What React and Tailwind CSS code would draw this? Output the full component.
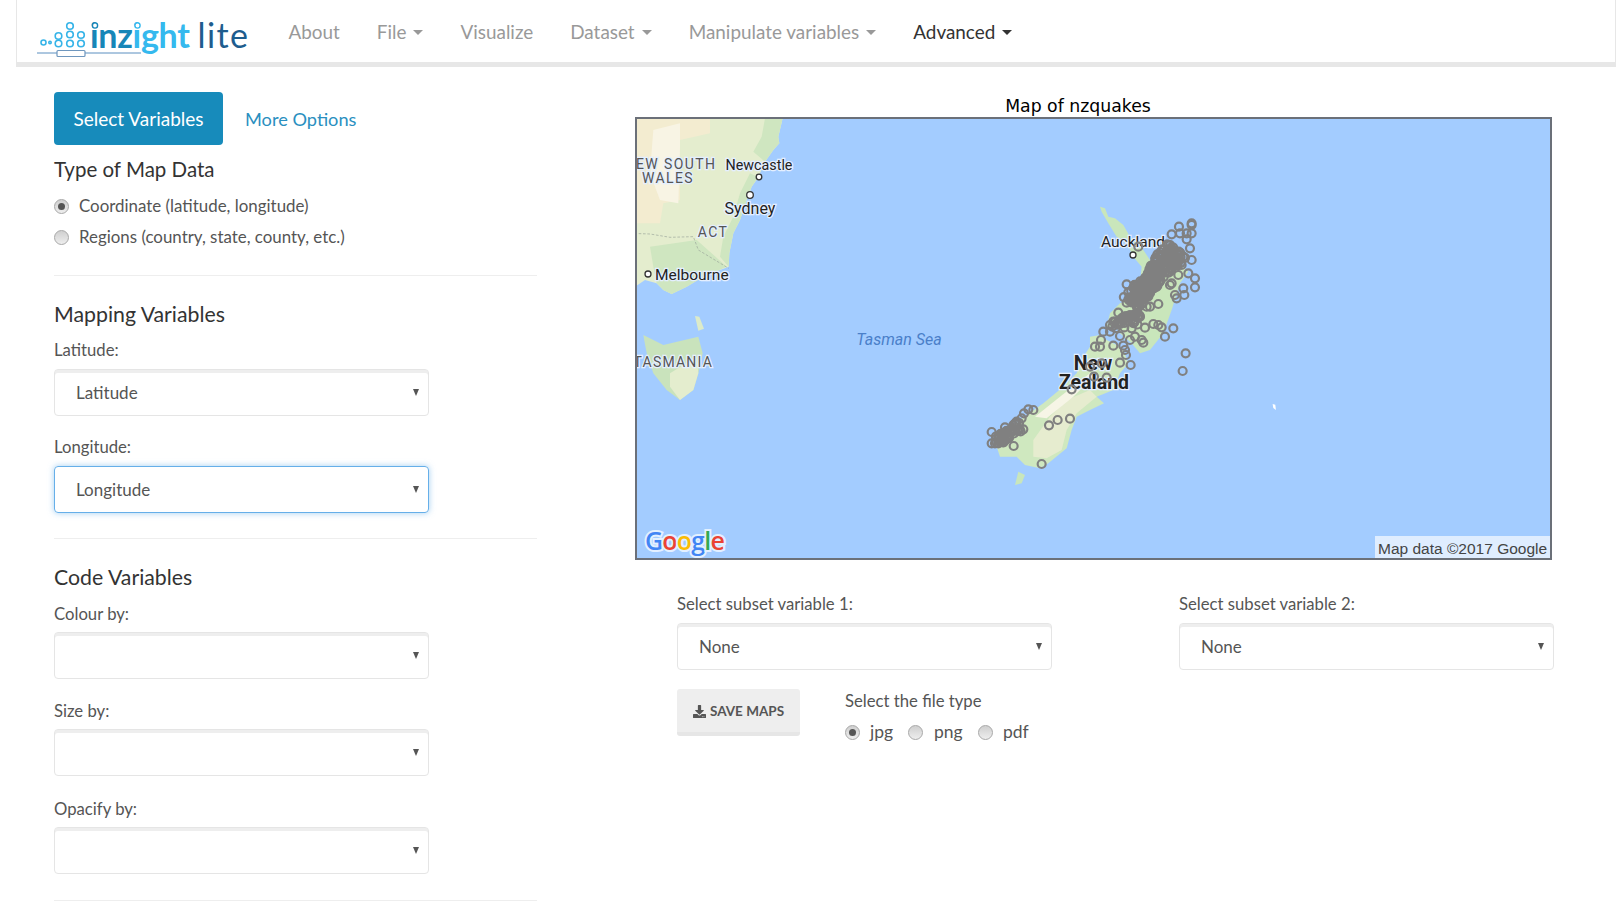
import React from "react";
import { FaDownload } from "react-icons/fa";

const navItems = [
  { label: "About" },
  { label: "File", caret: true },
  { label: "Visualize" },
  { label: "Dataset", caret: true },
  { label: "Manipulate variables", caret: true },
  { label: "Advanced", caret: true, active: true },
];

// scattered quakes, read off the map (in 3x crop coords, origin 950,200)
const outliers = [
  [725,70],[725,75],[687,80],[665,103],[690,100],[710,100],[725,100],[710,118],[720,145],[725,180],[700,170],[695,195],
  [715,220],[735,235],[735,262],[700,265],[703,285],[680,295],[675,285],[685,225],[665,250],[660,255],[530,253],[535,277],
  [600,210],[590,240],[565,140],[530,308],[570,350],[625,312],[590,320],[600,320],[505,338],[540,345],[515,355],[490,365],
  [480,375],[460,395],[480,395],[510,408],[545,385],[555,360],[585,383],[610,372],[625,375],[635,382],[670,385],[645,410],
  [555,410],[540,420],[575,420],[580,428],[453,420],[435,440],[450,440],[490,437],[520,437],[525,450],[528,465],[510,488],
  [542,495],[707,460],[698,513],[470,533],[432,530],[365,568],[420,500],[455,490],[250,630],[235,628],[222,640],[215,655],
  [200,665],[190,675],[165,682],[125,696],[220,688],[125,730],[135,730],[145,730],[191,738],[297,676],[323,660],[360,656],
  [275,792],[165,720],
];

function jitter(i) {
  const v = Math.sin(i * 12.9898) * 43758.5453;
  return v - Math.floor(v);
}

const quakes = [...outliers];
for (let i = 0; i < 220; i++) {
  const t = jitter(i);
  const off = (jitter(i + 500) - 0.5) * (t < 0.3 ? 70 : 56);
  quakes.push([680 - 138 * t + off * 0.8, 150 + 158 * t + off * 0.6]);
}
for (let i = 0; i < 30; i++) {
  quakes.push([485 + jitter(i + 900) * 85, 340 + jitter(i + 950) * 45]);
}
for (let i = 0; i < 40; i++) {
  const t = jitter(i + 1200);
  quakes.push([145 + 60 * t + (jitter(i + 1300) - 0.5) * 26, 722 - 42 * t + (jitter(i + 1400) - 0.5) * 26]);
}

function Radio({ checked }) {
  return (
    <span className="flex h-[15px] w-[15px] shrink-0 items-center justify-center rounded-full border border-[#a8a8a8] bg-gradient-to-b from-[#cfcfcf] to-[#eeeeee]">
      {checked && <span className="h-[7px] w-[7px] rounded-full bg-[#555]" />}
    </span>
  );
}

function SelectBox({ value, focus, className }) {
  return (
    <div
      className={
        "flex h-[47px] items-center justify-between rounded-[4px] border pl-[21px] pr-[9px] text-[17px] text-[#555] " +
        (focus
          ? "border-[#66afe9] shadow-[0_0_6px_rgba(102,175,233,0.6)] "
          : "border-[#e5e5e5] shadow-[inset_0_3px_0_#eeeeee] ") +
        className
      }
    >
      <span>{value}</span>
      <span className="h-0 w-0 border-x-[3.5px] border-t-[7px] border-x-transparent border-t-[#555]" />
    </div>
  );
}

function FieldLabel({ children, className = "" }) {
  return <div className={"h-[22px] text-[16.7px] leading-[22px] text-[#555] " + className}>{children}</div>;
}

function Heading({ children, className }) {
  return <div className={"h-[26px] leading-[26px] text-[#333] " + className}>{children}</div>;
}

function Logo() {
  const rings = [[43.5,42.5,2.5],[50,42.5,1.2],[58.5,36,3.3],[58.5,43.5,3.3],[70,26,3.3],[70,34.5,3.3],[70,43.5,3.3],[81,35,3.3],[81,43.5,3.3]];
  return (
    <svg width="232" height="62" viewBox="17 0 232 62" className="block shrink-0">
      {rings.map(([x, y, r], i) => (
        <circle key={i} cx={x} cy={y} r={r} fill="none" stroke="#36b4e8" strokeWidth="1.6" />
      ))}
      <path d="M37 53H57M85 53H141" stroke="#5b8fc0" strokeWidth="1" />
      <rect x="57" y="50.5" width="28" height="6" rx="1" fill="#fff" stroke="#6f97be" strokeWidth="1.2" />
      <text x="90" y="48" fontFamily="Lato, sans-serif" fontSize="34" fontWeight="700" letterSpacing="-0.3">
        <tspan fill="#1786b8">inz</tspan>
        <tspan fill="#35b9ee">ight</tspan>
        <tspan fill="#1e5d8e" fontWeight="400" dx="8" letterSpacing="1.4">lite</tspan>
      </text>
      <circle cx="95" cy="25.5" r="2.6" fill="#fff" stroke="#1786b8" strokeWidth="1.4" />
      <circle cx="137.5" cy="25.5" r="2.6" fill="#fff" stroke="#35b9ee" strokeWidth="1.4" />
    </svg>
  );
}

function MapLabel({ x, y, size = 14, anchor = "middle", fill = "#222", weight = 400, spacing = 0, italic, halo = "#e4efff", children }) {
  return (
    <text
      x={x}
      y={y}
      textAnchor={anchor}
      fontFamily="Roboto, sans-serif"
      fontSize={size}
      fontWeight={weight}
      fontStyle={italic ? "italic" : "normal"}
      letterSpacing={spacing}
      fill={fill}
      stroke={halo}
      strokeWidth={halo === "none" ? 0 : 2.5}
      paintOrder="stroke"
    >
      {children}
    </text>
  );
}

function QuakeMap() {
  return (
    <svg viewBox="637 119 913 439" className="block h-full w-full bg-[#a3ccff]">
      <defs>
        <filter id="soft">
          <feGaussianBlur stdDeviation="2" />
        </filter>
      </defs>
      {/* south-east Australia */}
      <g transform="translate(630 90) scale(0.3333)" filter="url(#soft)">
        <path d="M0 85H458L445 140 448 160 430 180 405 215 385 262 365 290 350 330 330 390 310 430 298 490 296 530 270 540 220 560 170 590 125 612 100 600 80 580 45 570 0 600Z" fill="#e4edce" />
        <path d="M0 85H240V130L150 150V330L100 340 90 400H0Z" fill="#f3ecd0" />
        <path d="M70 120 150 100V170L145 340 90 330 60 250Z" fill="#f8f4e4" />
        <path d="M405 85H458L445 140 448 160 430 180 405 215 370 185 395 140Z" fill="#cfe6c0" />
        <path d="M385 262 365 290 350 330 330 390 310 430 298 490 296 530 270 500 280 440 310 380 330 310 360 250Z" fill="#cfe6c0" />
        <path d="M60 470 200 450 290 530 220 560 170 590 125 612 100 600 80 580 70 530Z" fill="#cfe6c0" />
        <path d="M40 735 100 765 205 740 218 790 205 850 190 900 150 930 110 900 70 850 50 790Z" fill="#c9e3bc" />
        <path d="M120 850 200 800 205 850 190 900 150 930 120 890Z" fill="#e4edce" />
        <path d="M195 678 208 680 222 716 205 722Z" fill="#dcebc9" />
      </g>
      <g transform="translate(630 90) scale(0.3333)">
        <path d="M0 430 60 432 120 442 190 440 205 480 296 535" fill="none" stroke="#9aa59a" strokeWidth="2" strokeDasharray="8 5" />
      </g>
      {/* New Zealand */}
      <g transform="translate(950 200) scale(0.3333)" filter="url(#soft)">
        <path d="M450 20 465 25 475 50 495 55 520 75 540 110 560 125 580 150 600 180 620 190 650 175 675 180 715 215 690 250 665 330 640 400 600 450 570 460 545 430 510 400 500 380 470 380 480 340 510 310 545 300 570 250 575 200 550 170 530 130 500 110 475 70 455 35Z" fill="#c9e6bb" />
        <path d="M420 410 450 405 470 420 500 435 520 450 535 490 510 520 490 570 440 590 462 610 420 630 380 650 365 690 350 745 295 790 270 805 225 795 200 770 150 770 140 740 180 690 210 660 280 610 340 560 380 520 400 470 420 440Z" fill="#cfe8bf" />
        <path d="M250 720 300 650 350 600 420 570 440 590 380 640 350 690 335 750 290 775 250 770Z" fill="#e6eccf" />
        <path d="M255 650 330 590 420 520 430 530 370 590 290 655Z" fill="#f6f5e6" />
        <path d="M205 815 225 825 215 850 195 855Z" fill="#c9e6bb" />
        <path d="M968 612 976 614 978 630 970 624Z" fill="#ffffff" />
      </g>
      <MapLabel x={636} y={169} anchor="start" size={14} fill="#555" spacing={1.4}>EW SOUTH</MapLabel>
      <MapLabel x={668} y={183} size={14} fill="#555" spacing={1.4}>WALES</MapLabel>
      <MapLabel x={759} y={170} size={14.3}>Newcastle</MapLabel>
      <MapLabel x={750} y={214} size={16}>Sydney</MapLabel>
      <MapLabel x={713} y={237} size={14} fill="#555" spacing={1.4}>ACT</MapLabel>
      <MapLabel x={655} y={280} anchor="start" size={15.5}>Melbourne</MapLabel>
      <MapLabel x={713} y={367} anchor="end" size={14} fill="#555" spacing={1.2}>TASMANIA</MapLabel>
      <MapLabel x={899} y={345} size={16} fill="#4a7fc9" italic halo="none">Tasman Sea</MapLabel>
      <MapLabel x={1133} y={247} size={15.5}>Auckland</MapLabel>
      <MapLabel x={1093} y={370} size={19.5} weight={700}>New</MapLabel>
      <MapLabel x={1094} y={389} size={19.5} weight={700}>Zealand</MapLabel>
      {[[759,177,2.8],[750,195,3.3],[648,274,3],[1133,255,3]].map(([x, y, r]) => (
        <circle key={x} cx={x} cy={y} r={r} fill="#fff" stroke="#333" strokeWidth="1.3" />
      ))}
      <g transform="translate(950 200) scale(0.3333)" fill="none" stroke="#808080" strokeWidth="6.5">
        {quakes.map(([x, y], i) => (
          <circle key={i} cx={x} cy={y} r="12" />
        ))}
      </g>
      <text x={645} y={550} fontFamily="'Open Sans', sans-serif" fontSize="25" fontWeight="600" letterSpacing="-0.8" stroke="#e3f0ff" strokeWidth="4" paintOrder="stroke">
        <tspan fill="#4285f4">G</tspan>
        <tspan fill="#ea4335">o</tspan>
        <tspan fill="#fbbc05">o</tspan>
        <tspan fill="#4285f4">g</tspan>
        <tspan fill="#34a853">l</tspan>
        <tspan fill="#ea4335">e</tspan>
      </text>
      <rect x={1375} y={536} width={175} height={22} fill="#dfedff" />
      <text x={1378} y={554} fontFamily="'Liberation Sans', sans-serif" fontSize="15.5" fill="#444">Map data ©2017 Google</text>
    </svg>
  );
}

export default function App() {
  return (
    <div className="h-[916px] overflow-hidden bg-white font-[Lato,sans-serif]">
      {/* navbar */}
      <div className="ml-[16px] flex h-[67px] w-[1600px] items-center border-x border-b-[5px] border-[#e7e7e7] bg-white">
        <Logo />
        <div className="ml-[21px] flex items-center pt-[2px] text-[18.9px]">
          {navItems.map(item => (
            <div
              key={item.label}
              className={
                "flex items-center gap-[7px] px-[18.5px] " +
                (item.active ? "text-[#333]" : "text-[#999]")
              }
            >
              {item.label}
              {item.caret && (
                <span
                  className={
                    "mt-[2px] h-0 w-0 border-x-[5.5px] border-t-[5px] border-x-transparent " +
                    (item.active ? "border-t-[#333]" : "border-t-[#999]")
                  }
                />
              )}
            </div>
          ))}
        </div>
      </div>

      <div className="flex">
        {/* left column */}
        <div className="ml-[54px] w-[483px]">
          <div className="mt-[25px] flex items-center">
            <div className="flex h-[53px] w-[169px] items-center justify-center rounded-[4px] bg-[#178bbb] pt-[2px] text-[19px] text-white">
              Select Variables
            </div>
            <div className="ml-[22px] pt-[2px] text-[18.2px] text-[#2a8fc0]">More Options</div>
          </div>

          <Heading className="mt-[11px] text-[20.5px]">Type of Map Data</Heading>
          <label className="mt-[12px] flex h-[24px] items-center gap-[10px] text-[16.9px] text-[#555]">
            <Radio checked />
            Coordinate (latitude, longitude)
          </label>
          <label className="mt-[7px] flex h-[24px] items-center gap-[10px] text-[16.9px] text-[#555]">
            <Radio />
            Regions (country, state, county, etc.)
          </label>
          <div className="mt-[26px] h-px bg-[#eeeeee]" />

          <Heading className="mt-[25px] text-[21.3px]">Mapping Variables</Heading>
          <FieldLabel className="mt-[12px]">Latitude:</FieldLabel>
          <SelectBox value="Latitude" className="mt-[8px] w-[375px]" />
          <FieldLabel className="mt-[20px]">Longitude:</FieldLabel>
          <SelectBox value="Longitude" focus className="mt-[8px] w-[375px]" />
          <div className="mt-[25px] h-px bg-[#eeeeee]" />

          <Heading className="mt-[25px] text-[21.3px]">Code Variables</Heading>
          <FieldLabel className="mt-[13px]">Colour by:</FieldLabel>
          <SelectBox className="mt-[7px] w-[375px]" />
          <FieldLabel className="mt-[21px]">Size by:</FieldLabel>
          <SelectBox className="mt-[7px] w-[375px]" />
          <FieldLabel className="mt-[22px]">Opacify by:</FieldLabel>
          <SelectBox className="mt-[7px] w-[375px]" />
          <div className="mt-[26px] h-px bg-[#eeeeee]" />
        </div>

        {/* right column */}
        <div className="ml-[98px] w-[919px]">
          <div className="mt-[28px] h-[22px] pr-[33px] text-center font-['DejaVu_Sans'] text-[17.3px] leading-[22px] text-black">
            Map of nzquakes
          </div>
          <div className="h-[443px] w-[917px] border-2 border-[#6b7079]">
            <QuakeMap />
          </div>

          <div className="ml-[42px] mt-[33px] flex gap-[127px]">
            <div className="w-[375px]">
              <FieldLabel>Select subset variable 1:</FieldLabel>
              <SelectBox value="None" className="mt-[8px]" />
            </div>
            <div className="w-[375px]">
              <FieldLabel>Select subset variable 2:</FieldLabel>
              <SelectBox value="None" className="mt-[8px]" />
            </div>
          </div>

          <div className="ml-[42px] mt-[19px] flex">
            <button className="flex h-[47px] w-[123px] items-center justify-center gap-[4px] rounded-[3px] border-b-4 border-[#e6e6e6] bg-[#eeeeee] pt-[1px] text-[13.5px] font-bold text-[#555]">
              <FaDownload className="text-[13px]" />
              SAVE MAPS
            </button>
            <div className="ml-[45px] mt-px">
              <FieldLabel>Select the file type</FieldLabel>
              <div className="mt-[8px] flex h-[24px] items-center text-[17.5px] text-[#555]">
                <Radio checked />
                <span className="ml-[10px] w-[38px]">jpg</span>
                <Radio />
                <span className="ml-[11px] w-[44px]">png</span>
                <Radio />
                <span className="ml-[10px]">pdf</span>
              </div>
            </div>
          </div>
        </div>
      </div>
    </div>
  );
}
